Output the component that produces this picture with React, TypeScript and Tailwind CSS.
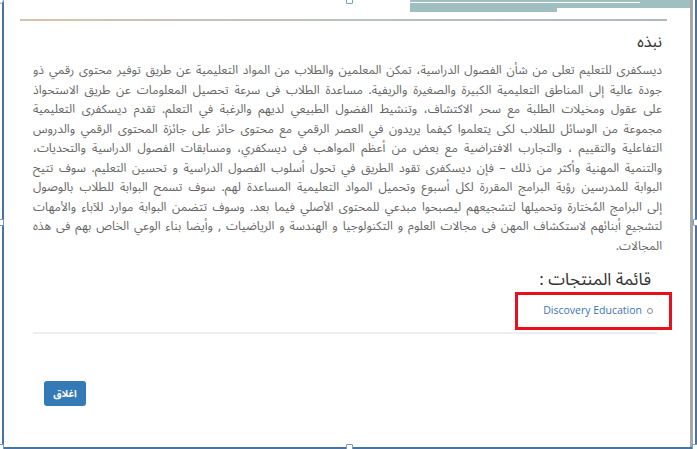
import React from "react";

const lines = [
  "ديسكفرى للتعليم تعلى من شأن الفصول الدراسية، تمكن المعلمين والطلاب من المواد التعليمية عن طريق توفير محتوى رقمي ذو",
  "جودة عالية إلى المناطق التعليمية الكبيرة والصغيرة والريفية. مساعدة الطلاب فى سرعة تحصيل المعلومات عن طريق الاستحواذ",
  "على عقول ومخيلات الطلبة مع سحر الاكتشاف، وتنشيط الفضول الطبيعي لديهم والرغبة في التعلم. تقدم ديسكفرى التعليمية",
  "مجموعة من الوسائل للطلاب لكى يتعلموا كيفما يريدون في العصر الرقمي مع محتوى حائز على جائزة المحتوى الرقمي والدروس",
  "التفاعلية والتقييم ، والتجارب الافتراضية مع بعض من أعظم المواهب فى ديسكفري، ومسابقات الفصول الدراسية والتحديات،",
  "والتنمية المهنية وأكثر من ذلك – فإن ديسكفرى تقود الطريق في تحول أسلوب الفصول الدراسية و تحسين التعليم. سوف تتيح",
  "البوابة للمدرسين رؤية البرامج المقررة لكل أسبوع وتحميل المواد التعليمية المساعدة لهم. سوف تسمح البوابة للطلاب بالوصول",
  "إلى البرامج المُختارة وتحميلها لتشجيعهم ليصبحوا مبدعي للمحتوى الأصلي فيما بعد. وسوف تتضمن البوابة موارد للآباء والأمهات",
  "لتشجيع أبنائهم لاستكشاف المهن فى مجالات العلوم و التكنولوجيا و الهندسة و الرياضيات , وأيضا بناء الوعي الخاص بهم فى هذه",
];

const arabicFont = "font-['Noto_Sans_Arabic','DejaVu_Sans',sans-serif]";

function Handle({ className }: { className: string }) {
  return (
    <div
      className={`absolute w-[7px] h-[7px] bg-white border border-[#7a9cbf] rounded-[1px] ${className}`}
    />
  );
}

export default function App() {
  return (
    <div className="relative w-[697px] h-[449px] bg-white overflow-hidden">
      {/* frame lines */}
      <div className="absolute left-[2px] top-0 w-[2px] h-[448px] bg-[#4a74a0]" />
      <div className="absolute left-0 top-[447px] w-[697px] h-[2px] bg-[#4a74a0]" />
      <div className="absolute left-[690px] top-0 w-[3px] h-[447px] bg-[#a8a8a8]" />
      <div className="absolute left-[695px] top-0 w-[2px] h-[449px] bg-[#4a74a0]" />
      {/* handles */}
      <div className="absolute -left-[4px] -top-[4px] w-[8px] h-[8px] rounded-full bg-white border border-[#7a9cbf]" />
      <Handle className="left-[346px] -top-[3px]" />
      <Handle className="-left-[3px] top-[219px]" />
      <Handle className="left-[693px] top-[219px]" />
      <Handle className="-left-[3px] top-[444px]" />
      <Handle className="left-[346px] top-[444px]" />
      <Handle className="left-[692px] top-[444px]" />

      <div className="flex flex-col">
        {/* top cropped banner */}
        <div className="flex justify-end pr-[7px] h-[12px]">
          <div className="w-[280px] h-[12px] bg-[#9fbfc0] flex flex-col">
            <div className="h-[2px]" />
            <div className="h-[1px] w-[230px] bg-white" />
            <div className="h-[5px]" />
            <div className="h-[4px] flex">
              <div className="w-[147px]" />
              <div className="flex-1 bg-white" />
            </div>
          </div>
        </div>
        <div className="h-[7px]" />
        <div className="ml-[20px] w-[647px] h-[2px] bg-gradient-to-r from-[#c9a88a] via-[#9aa8a0] to-[#8c9aa6] opacity-70" />

        {/* body */}
        <div dir="rtl" className={`pr-[35px] pl-[33px] ${arabicFont}`}>
          <div className="mt-[11px] text-[16px] leading-[20px] text-[#333]">نبذه</div>
          <div className="mt-[9px] text-[12px] leading-[19.5px] text-[#666]">
            {lines.map((l, i) => (
              <div key={i} className="h-[19.5px] whitespace-nowrap text-justify [text-align-last:justify]">
                {l}
              </div>
            ))}
            <div className="h-[19.5px] whitespace-nowrap">المجالات.</div>
          </div>
          <div className="mt-[13px] text-[17px] leading-[22px] text-[#333] pr-[11px]">قائمة المنتجات :</div>
          <div className="mt-[1px] flex">
            <div className="w-[157px] h-[38px] border-[3px] border-[#e8101c] -mr-[10px] flex items-center pr-[16px]">
              <div className="w-[6px] h-[6px] rounded-full border border-[#888] ml-[5px]" />
              <span dir="ltr" className="text-[10.5px] text-[#3a73b8] font-['Open_Sans',sans-serif]">
                Discovery Education
              </span>
            </div>
          </div>
        </div>
        <div className="mt-[2px] ml-[33px] w-[624px] h-[2px] bg-[#eeeeee]" />
        <div className="mt-[45px] ml-[44px]">
          <button className={`w-[42px] h-[25px] rounded-[3px] bg-[#337ab7] text-white text-[10px] font-bold ${arabicFont}`}>
            اغلاق
          </button>
        </div>
      </div>
    </div>
  );
}
